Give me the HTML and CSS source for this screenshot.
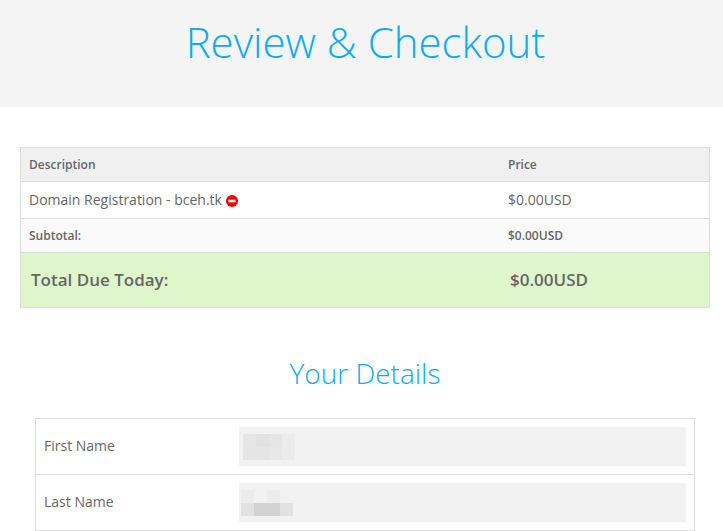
FILE: index.html
```html
<!DOCTYPE html>
<html lang="en">
<head>
<meta charset="utf-8">
<title>Review &amp; Checkout</title>
<link rel="stylesheet" href="styles.css">
</head>
<body>
<header class="hero"><h1>Review &amp; Checkout</h1></header>
<main class="content">
  <table class="cart">
    <thead>
      <tr class="head"><th class="c-desc">Description</th><th>Price</th></tr>
    </thead>
    <tbody>
      <tr class="item">
        <td>Domain Registration - bceh.tk <svg class="remove" viewBox="0 0 12 12" width="12" height="12" aria-hidden="true"><circle cx="6" cy="6" r="6" fill="#f00000"/><rect x="2.5" y="4.7" width="7" height="2.6" fill="#fff"/></svg></td>
        <td>$0.00USD</td>
      </tr>
      <tr class="sub"><td class="sub-label">Subtotal:</td><td class="sub-val">$0.00USD</td></tr>
      <tr class="total"><td>Total Due Today:</td><td>$0.00USD</td></tr>
    </tbody>
  </table>
  <h2 class="section">Your Details</h2>
  <div class="form">
    <div class="row">
      <label>First Name</label>
      <div class="field">
        <div class="mosaic m-first">
          <i class="a"></i><i class="b"></i><i class="e"></i><i class="c"></i>
          <i class="e"></i><i class="e"></i><i class="f"></i><i class="c"></i>
        </div>
      </div>
    </div>
    <div class="row">
      <label>Last Name</label>
      <div class="field">
        <div class="mosaic m-last">
          <i class="c"></i><i class="n"></i><i class="c"></i><i class="n"></i>
          <i class="b"></i><i class="d"></i><i class="d"></i><i class="b"></i>
        </div>
      </div>
    </div>
  </div>
</main>
</body>
</html>
```
FILE: styles.css
```css
html, body { margin: 0; padding: 0; height: 531px; overflow: hidden; }
body { background: #fff; color: #666; font-family: "Open Sans", sans-serif; font-size: 14px; }
.hero { background: #f4f4f4; height: 107px; text-align: center; }
.hero h1 { margin: 0; padding: 14px 0 0 8px; font-size: 42px; line-height: 56px; font-weight: 300; color: #0cabf2; }
.content { padding: 40px 13px 0 20px; }
.cart { width: 690px; border-collapse: collapse; table-layout: fixed; border: 1px solid #ddd; }
.cart th, .cart td { padding: 0 8px; text-align: left; border-top: 1px solid #ddd; }
.c-desc { width: 463px; }
.head th { background: #f0f0f0; height: 33px; font-size: 12px; font-weight: 600; }
.item td { height: 35px; font-size: 14px; padding-bottom: 1px; }
.remove { vertical-align: -2px; }
.sub td { height: 33px; background: #fafafa; font-size: 12px; font-weight: 600; }
.total td { height: 52px; background: #dff6ca; font-size: 17px; font-weight: 600; padding: 0 8px 2px 10px; }
.section { margin: 45px 0 0; text-align: center; font-size: 28px; line-height: 40px; font-weight: 300; color: #0cabf2; }
.form { margin: 25px 0 0 15px; width: 658px; border: 1px solid #ddd; }
.row { display: flex; align-items: center; height: 55px; padding-left: 8px; border-top: 1px solid #ddd; }
.row:first-child { border-top: 0; }
.row label { width: 195px; font-size: 14px; padding-bottom: 2px; }
.field { width: 447px; height: 39px; background: #f2f2f2; display: flex; align-items: center; }
.mosaic { display: grid; grid-template-columns: repeat(4, 13px); grid-auto-rows: 13px; }
.m-first { margin-left: 4px; }
.m-last { margin-left: 2px; }
.mosaic .a { background: #e6e6e6; }
.mosaic .b { background: #e2e2e2; }
.mosaic .c { background: #ececec; }
.mosaic .d { background: #d2d2d2; }
.mosaic .e { background: #e5e5e5; }
.mosaic .f { background: #e8e8e8; }
.mosaic .n { background: transparent; }
```
